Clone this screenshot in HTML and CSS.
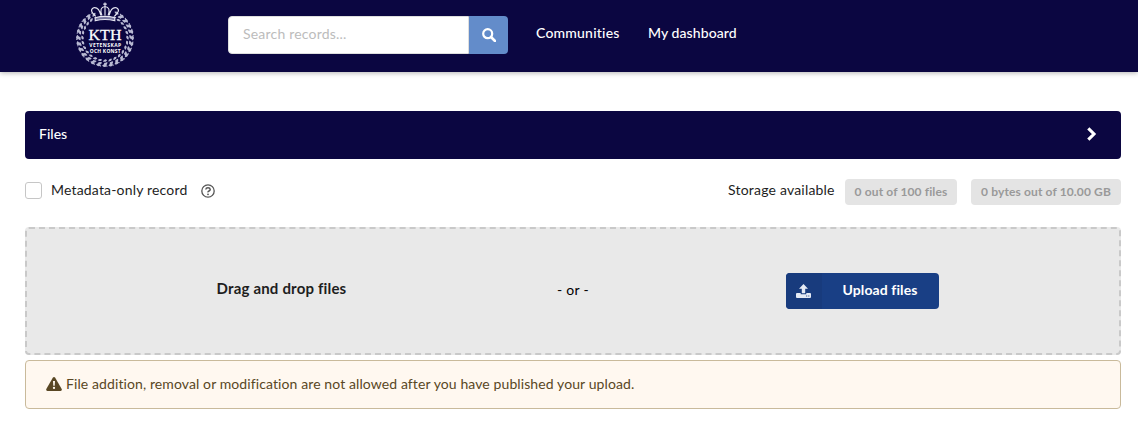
FILE: index.html
```html
<!DOCTYPE html>
<html lang="en">
<head>
<meta charset="utf-8">
<title>New upload</title>
<link rel="stylesheet" href="styles.css">
</head>
<body>
<header class="topbar">
  <svg class="logo" viewBox="0 0 60 68" aria-label="KTH">
    <defs>
      <g id="leaf">
        <path d="M30 9.2q-2.6-2.6-4.8.2q2.5 2.2 4.8-.2M30.3 12.2q1.2-3.6 4.4-2q-1.3 3-4.4 2M29.7 13.2q-2.9-.8-4 1.9q2.9 1.2 4-1.9"/>
        <circle cx="32.2" cy="14.3" r=".9"/><circle cx="27.7" cy="11.6" r=".6"/><circle cx="31.5" cy="8.6" r=".6"/>
      </g>
    </defs>
    <g fill="#b9bad3">
      <use href="#leaf" transform="rotate(30 30 36)"/><use href="#leaf" transform="rotate(43 30 36)"/><use href="#leaf" transform="rotate(56 30 36)"/><use href="#leaf" transform="rotate(69 30 36)"/><use href="#leaf" transform="rotate(82 30 36)"/><use href="#leaf" transform="rotate(95 30 36)"/><use href="#leaf" transform="rotate(108 30 36)"/><use href="#leaf" transform="rotate(121 30 36)"/><use href="#leaf" transform="rotate(134 30 36)"/><use href="#leaf" transform="rotate(147 30 36)"/><use href="#leaf" transform="rotate(160 30 36)"/><use href="#leaf" transform="rotate(173 30 36)"/><use href="#leaf" transform="rotate(186 30 36)"/><use href="#leaf" transform="rotate(199 30 36)"/><use href="#leaf" transform="rotate(212 30 36)"/><use href="#leaf" transform="rotate(225 30 36)"/><use href="#leaf" transform="rotate(238 30 36)"/><use href="#leaf" transform="rotate(251 30 36)"/><use href="#leaf" transform="rotate(264 30 36)"/><use href="#leaf" transform="rotate(277 30 36)"/><use href="#leaf" transform="rotate(290 30 36)"/><use href="#leaf" transform="rotate(303 30 36)"/><use href="#leaf" transform="rotate(316 30 36)"/><use href="#leaf" transform="rotate(329 30 36)"/>
    </g>
    <g fill="none" stroke="#e6e6f2" stroke-width="1.1">
      <path d="M30 1.5v4M28.3 3h3.4M21 15q-7-6-2-8.4q5-1 7 7.4M39 15q7-6 2-8.4q-5-1-7 7.4M27 14q-3-8 3-8.6q6 .6 3 8.6M30 6v8"/>
      <path d="M20.5 16.2q9.5-2.4 19 0v3q-9.5-2.4-19 0z" fill="#7776a0"/>
    </g>
    <g fill="#fff" text-anchor="middle">
      <text class="logo-name" x="30" y="37.6" textLength="32" lengthAdjust="spacingAndGlyphs">KTH</text>
      <text class="logo-motto" x="30.2" y="44.8" textLength="31">VETENSKAP</text>
      <text class="logo-motto" x="30.2" y="50.4" textLength="30">OCH KONST</text>
    </g>
  </svg>
  <form class="search">
    <input class="search-input" type="text" placeholder="Search records...">
    <button class="search-button" type="button" aria-label="Search">
      <svg width="14" height="14" viewBox="0 0 14 14" fill="none" stroke="#fff"><circle cx="5.7" cy="5.7" r="4.5" stroke-width="2.2"/><path d="M9 9l4 4" stroke-width="2.6" stroke-linecap="round"/></svg>
    </button>
  </form>
  <nav class="nav"><a class="nav-link communities">Communities</a><a class="nav-link dashboard">My dashboard</a></nav>
</header>
<main class="content">
  <div class="section-head"><span class="section-title">Files</span>
    <svg width="10" height="14" viewBox="0 0 10 14" fill="none" stroke="#fff" stroke-width="3.1"><path d="M1.3 1.3L7 7l-5.7 5.7"/></svg>
  </div>
  <div class="options">
    <span class="checkbox"></span><span class="check-label">Metadata-only record</span>
    <svg class="help" width="14" height="14" viewBox="0 0 14 14" fill="none" stroke="#555"><circle cx="7" cy="7" r="6.2" stroke-width="1.3"/><path d="M4.8 5.5Q5 3.7 7 3.7T9.2 5.4Q9.2 6.4 8 7T7 8.4" stroke-width="1.5"/><circle cx="7" cy="10.3" r=".9" fill="#555" stroke="none"/></svg>
    <span class="storage">Storage available</span>
    <span class="label label-files"><span>0 out of 100 files</span></span>
    <span class="label label-bytes"><span>0 bytes out of 10.00 GB</span></span>
  </div>
  <section class="dropzone">
    <div class="drop-cell drop-title"><span>Drag and drop files</span></div>
    <div class="drop-cell drop-or"><span>- or -</span></div>
    <div class="drop-cell">
      <button class="upload" type="button"><span class="upload-icon"><svg width="15" height="14" viewBox="0 0 15 14" fill="#e4eaf5"><path d="M7.5 0L12 4.7H9.2V9.3H5.8V4.7H3z"/><path fill-rule="evenodd" d="M1 9h3.7v1.3h5.6V9H14q1 0 1 1v3q0 1-1 1H1q-1 0-1-1v-3q0-1 1-1zM10.2 11.6v1h1v-1zM12.3 11.6v1h1v-1z"/></svg></span><span class="upload-text"><span>Upload files</span></span></button>
    </div>
  </section>
  <div class="warning">
    <svg width="16" height="14" viewBox="0 0 16 14"><path d="M6.8.8Q8-.8 9.2.8L15.7 12Q16.3 13.7 14.6 14H1.4Q-.3 13.7.3 12z" fill="#594724"/><path d="M7 4h2l-.3 4.7H7.3z" fill="#fff8ee"/><circle cx="8" cy="10.9" r="1.15" fill="#fff8ee"/></svg>
    <span class="warning-text">File addition, removal or modification are not allowed after you have published your upload.</span>
  </div>
</main>
</body>
</html>
```
FILE: styles.css
```css
* { box-sizing: border-box; }
body { margin: 0; background: #fff; color: #1e1e1e; font: 14px/20px Lato, "Open Sans", sans-serif; white-space: nowrap; }
.topbar { display: flex; align-items: flex-start; height: 72px; padding-left: 74px; background: #0b0641; box-shadow: 0 1px 5px rgba(0, 0, 0, .3); }
.logo { width: 62px; height: 70px; margin-top: 1px; }
.logo-name { font: 14px "Liberation Serif", serif; stroke: #fff; stroke-width: .25px; }
.logo-motto { font: bold 4.8px "Open Sans", sans-serif; }
.search { display: flex; width: 280px; height: 38px; margin: 16px 0 0 92px; }
.search-input { width: 241px; padding: 0 14px 3px; border: 1px solid #dedede; border-radius: 4px 0 0 4px; font: 14px Lato, sans-serif; letter-spacing: .2px; outline: 0; }
.search-input::placeholder { color: #bcbcbc; }
.search-button { display: flex; align-items: center; justify-content: center; width: 39px; padding: 0; border: 0; border-radius: 0 4px 4px 0; background: #638cca; }
.nav { display: flex; gap: 28px; padding: 23px 0 0 28px; }
.nav-link { color: #fff; font-weight: 500; }
.communities { width: 84px; letter-spacing: .2px; }
.dashboard { letter-spacing: .08px; }
.content { padding: 39px 17px 0 25px; }
.section-head { display: flex; align-items: center; justify-content: space-between; height: 48px; padding: 0 24px 2px 14px; border-radius: 4px; background: #0b0641; color: #fff; }
.section-title { font-weight: 500; }
.options { display: flex; align-items: center; height: 26px; margin-top: 20px; }
.checkbox { width: 17px; height: 17px; margin-top: -3px; border: 1px solid #c6c6c6; border-radius: 3px; }
.check-label { width: 136px; margin: -4px 14px 0 9px; letter-spacing: .18px; }
.help { margin-top: -3px; }
.storage { width: 107px; margin: -4px 10px 0 auto; letter-spacing: .2px; }
.label { display: flex; align-items: center; justify-content: center; height: 26px; border-radius: 4px; background: #e4e4e4; color: #999; font-size: 12px; font-weight: 700; letter-spacing: .13px; }
.label-files { width: 112px; margin-right: 14px; }
.label-bytes { width: 150px; }
.dropzone { display: grid; grid-template-columns: 1fr 82px 1fr; align-items: center; height: 128px; margin-top: 22px; border: 2px dashed #c9c9c9; border-radius: 4px; background: #e9e9e9; }
.drop-cell { display: flex; justify-content: center; }
.drop-title { padding: 0 0 6px 4px; font-size: 15px; font-weight: 700; letter-spacing: .18px; }
.drop-or { padding-bottom: 2px; color: #000; letter-spacing: .3px; }
.upload { display: flex; width: 153px; height: 36px; margin-left: -9px; padding: 0; border: 0; border-radius: 4px; overflow: hidden; background: #193f85; color: #fff; font: bold 14px/34px Lato, sans-serif; letter-spacing: .1px; }
.upload-icon { display: flex; align-items: center; justify-content: center; width: 36px; height: 36px; background: #183b7d; }
.upload-text { display: flex; justify-content: center; flex: 1; }
.warning { display: flex; align-items: center; gap: 4px; height: 49px; margin-top: 5px; padding: 0 0 2px 20px; border: 1px solid #c9ba9b; border-radius: 4px; background: #fff8f0; color: #594724; }
.warning-text { letter-spacing: .1px; }
```
